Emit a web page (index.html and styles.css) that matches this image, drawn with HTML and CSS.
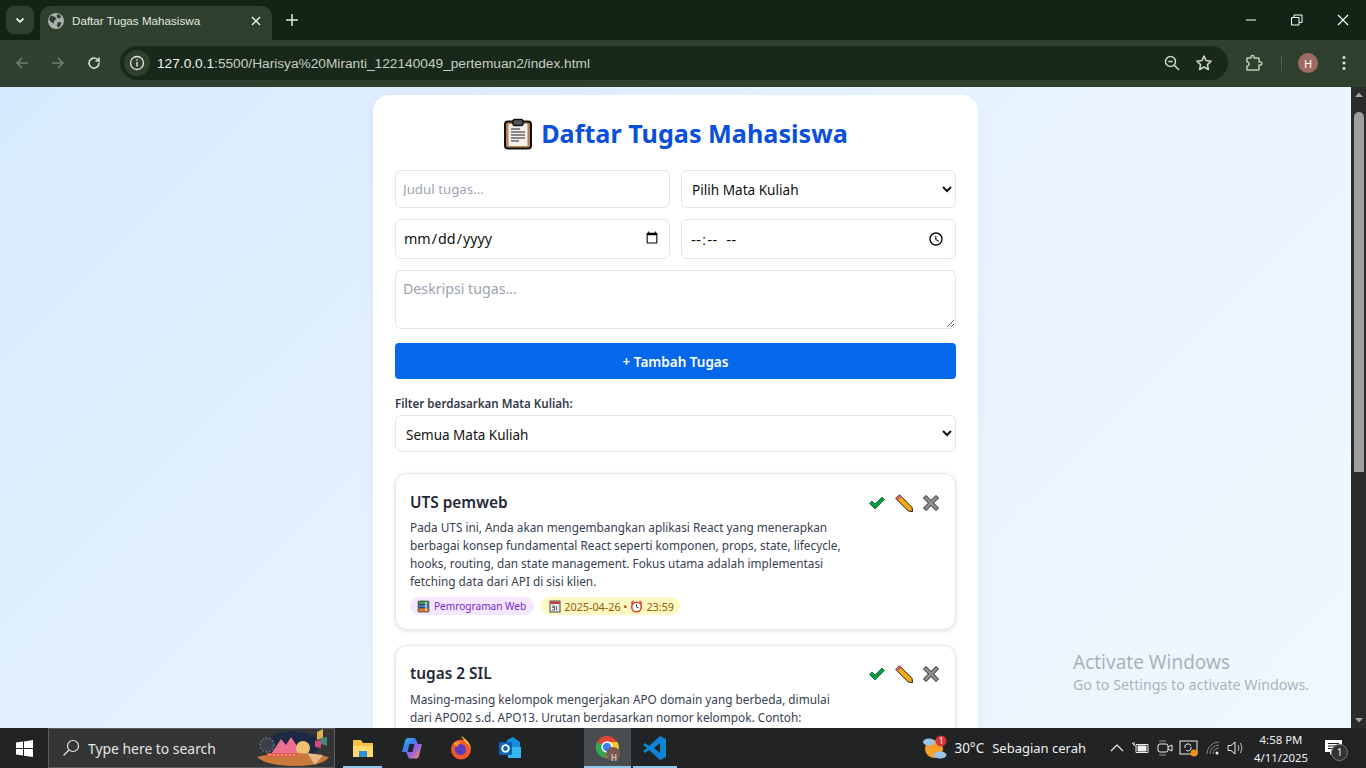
FILE: index.html
```html
<!DOCTYPE html>
<html lang="en-US">
<head>
<meta charset="utf-8">
<title>Daftar Tugas Mahasiswa</title>
<link rel="stylesheet" href="styles.css">
</head>
<body>
<div class="tabstrip">
  <div class="tabsearch"><svg width="12" height="12" viewBox="0 0 12 12"><path d="M2.500 4.500 6 8l3.500-3.500" fill="none" stroke="#e3e8e0" stroke-width="1.800"/></svg></div>
  <div class="tab">
    <svg class="favicon" width="16" height="16" viewBox="0 0 16 16"><circle cx="8" cy="8" r="8" fill="#aab0ad"/><path d="M3 2.500 7 4l1.500 2-2 1.500-1 3L3 9 1 6.500zM10 1l3 2-1 2.500-2.500-.5-1-2.500zM10 9l3.500 .5-1.500 4-2.500 1L9 12z" fill="#2f3f2e"/></svg>
    <span class="tabtitle">Daftar Tugas Mahasiswa</span>
    <svg class="tabclose" width="10" height="10" viewBox="0 0 10 10"><path d="M1 1l8 8M9 1 1 9" stroke="#e3e8e0" stroke-width="1.500"/></svg>
  </div>
  <svg class="newtab" width="12" height="12" viewBox="0 0 12 12"><path d="M6 0v12M0 6h12" stroke="#e3e8e0" stroke-width="1.500"/></svg>
  <div class="winctl">
    <svg width="12" height="12" viewBox="0 0 12 12"><path d="M1 6h10" stroke="#fff"/></svg>
    <svg width="12" height="12" viewBox="0 0 12 12"><path d="M.5 3.500h7.500v7.500H.5zM3 3.500V1h8v7.500H8" fill="none" stroke="#fff"/></svg>
    <svg width="12" height="12" viewBox="0 0 12 12"><path d="M1 1l10 10M11 1 1 11" stroke="#fff" stroke-width="1.100"/></svg>
  </div>
</div>
<div class="toolbar">
  <svg class="navic" width="16" height="16" viewBox="0 0 16 16"><path d="M14 8H3M8 3 3 8l5 5" fill="none" stroke="#6f7f6e" stroke-width="1.500"/></svg>
  <svg class="navic" width="16" height="16" viewBox="0 0 16 16"><path d="M2 8h11M8 3l5 5-5 5" fill="none" stroke="#6f7f6e" stroke-width="1.500"/></svg>
  <svg class="navic" width="16" height="16" viewBox="0 0 16 16"><path d="M13 8a5 5 0 1 1-1.500-3.500L13 6V2.500M13 6H9.500" fill="none" stroke="#d5dcd2" stroke-width="1.600"/></svg>
  <div class="omnibox">
    <div class="siteinfo"><svg width="16" height="16" viewBox="0 0 16 16"><circle cx="8" cy="8" r="6.500" fill="none" stroke="#e3e8e0" stroke-width="1.300"/><path d="M8 7v4.500M8 4.300v1.500" stroke="#e3e8e0" stroke-width="1.400"/></svg></div>
    <span class="url"><span class="urlhost">127.0.0.1</span>:5500/Harisya%20Miranti_122140049_pertemuan2/index.html</span>
    <svg class="omniic" width="18" height="18" viewBox="0 0 18 18"><circle cx="7.500" cy="7.500" r="5" fill="none" stroke="#cfd8cc" stroke-width="1.500"/><path d="M11 11l5 5M5.300 7.500h4.400" stroke="#cfd8cc" stroke-width="1.500"/></svg>
    <svg class="omniic" width="18" height="18" viewBox="0 0 18 18"><path d="M9 2l2.100 4.600 5 .6-3.700 3.400 1 4.900L9 13l-4.400 2.500 1-4.900L1.900 7.200l5-.6z" fill="none" stroke="#cfd8cc" stroke-width="1.500" stroke-linejoin="round"/></svg>
  </div>
  <svg class="ext" width="18" height="18" viewBox="0 0 18 18"><path d="M2 4h4V3a1.500 1.500 0 0 1 3 0v1h5v4h1.500a1.500 1.500 0 0 1 0 3H14v5H2v-4a2 2 0 0 0 0-4z" fill="none" stroke="#bccbb8" stroke-width="1.500" stroke-linejoin="round"/></svg>
  <div class="sep"></div>
  <div class="avatar">H</div>
  <svg class="menu" width="4" height="16" viewBox="0 0 4 16"><circle cx="2" cy="2.500" r="1.600" fill="#d5dcd2"/><circle cx="2" cy="8" r="1.600" fill="#d5dcd2"/><circle cx="2" cy="13.500" r="1.600" fill="#d5dcd2"/></svg>
</div>
<div class="viewport">
  <main class="page">
    <div class="container">
      <h1 class="title">
        <svg class="clip" width="30" height="32" viewBox="0 0 30 32"><rect x="2" y="3.500" width="26" height="27" rx="3" fill="#b5835a" stroke="#111" stroke-width="2"/><rect x="5.500" y="6" width="19" height="22" fill="#f3f1ec"/><rect x="10" y="1.500" width="10" height="6" rx="2" fill="#555" stroke="#111" stroke-width="1.500"/><path d="M8 11h9M8 14h14M8 17h14M8 20h14M8 23h8" stroke="#666" stroke-width="1.300"/></svg>
        <span>Daftar Tugas Mahasiswa</span>
      </h1>
      <div class="formgrid">
        <input class="field f38 judul" type="text" placeholder="Judul tugas...">
        <select class="field f38 sel"><option>Pilih Mata Kuliah</option></select>
        <input class="field f40 dt" type="date">
        <input class="field f40 tm" type="time">
      </div>
      <textarea class="field desc" placeholder="Deskripsi tugas..."></textarea>
      <button class="add">+ Tambah Tugas</button>
      <label class="flabel">Filter berdasarkan Mata Kuliah:</label>
      <select class="field sel fsel"><option>Semua Mata Kuliah</option></select>
      <article class="task">
        <div class="taskbody">
          <h3 class="tasktitle">UTS pemweb</h3>
          <p class="taskdesc">Pada UTS ini, Anda akan mengembangkan aplikasi React yang menerapkan berbagai konsep fundamental React seperti komponen, props, state, lifecycle, hooks, routing, dan state management. Fokus utama adalah implementasi fetching data dari API di sisi klien.</p>
          <div class="tags">
            <span class="tag purple"><svg width="13" height="13" viewBox="0 0 13 13"><rect x="1" y="1" width="11" height="3.500" rx="1" fill="#3f9a5a" stroke="#333" stroke-width=".7"/><rect x="1" y="4.500" width="11" height="3.500" rx="1" fill="#3c78c8" stroke="#333" stroke-width=".7"/><rect x="1" y="8" width="11" height="4" rx="1" fill="#e07a2e" stroke="#333" stroke-width=".7"/><path d="M9 2v9" stroke="#eee" stroke-width="1.200"/></svg>Pemrograman Web</span>
            <span class="tag yellow"><svg width="12" height="13" viewBox="0 0 12 13"><rect x="1" y="1" width="10" height="11" fill="#eee" stroke="#444"/><rect x="1.500" y="1.500" width="9" height="2.500" fill="#c0392b"/><path d="M3 6h2.500v1.500H3.500M3.500 7.500H5.500V10H3M7.500 6v4.500" fill="none" stroke="#444" stroke-width=".8"/></svg>2025-04-26 • <svg width="13" height="13" viewBox="0 0 13 13"><circle cx="6.500" cy="7" r="4.800" fill="#fff" stroke="#d9432f" stroke-width="1.600"/><path d="M6.500 4.500V7l2 1" stroke="#333" fill="none"/><path d="M1 3.500 3.500 1M12 3.500 9.500 1" stroke="#d9432f" stroke-width="1.400"/></svg>23:59</span>
          </div>
        </div>
        <div class="actions">
          <svg width="18" height="18" viewBox="0 0 18 18"><path d="M1.500 9.500 4 7l3 3 7-7 2.500 2.500L7 15z" fill="#0a9a3c" stroke="#064" stroke-width=".8"/></svg>
          <svg width="18" height="18" viewBox="0 0 18 18"><path d="M4.500 .8 17 13.300l.6 4.300-4.300-.6L.8 4.500z" fill="#f4a916" stroke="#222" stroke-width="1"/><path d="M1.300 4.500 4.500 1.300 6.300 3.100 3.100 6.300z" fill="#e5566a"/></svg>
          <svg width="18" height="18" viewBox="0 0 18 18"><path d="M4 1.500 9 6.500l5-5L16.500 4l-5 5 5 5-2.500 2.500-5-5-5 5L1.500 14l5-5-5-5z" fill="#8f8f8f" stroke="#222" stroke-width="1"/></svg>
        </div>
      </article>
      <article class="task">
        <div class="taskbody">
          <h3 class="tasktitle">tugas 2 SIL</h3>
          <p class="taskdesc">Masing-masing kelompok mengerjakan APO domain yang berbeda, dimulai dari APO02 s.d. APO13. Urutan berdasarkan nomor kelompok. Contoh: kelompok 1 mengerjakan APO02, kelompok 2 mengerjakan APO03.</p>
        </div>
        <div class="actions">
          <svg width="18" height="18" viewBox="0 0 18 18"><path d="M1.500 9.500 4 7l3 3 7-7 2.500 2.500L7 15z" fill="#0a9a3c" stroke="#064" stroke-width=".8"/></svg>
          <svg width="18" height="18" viewBox="0 0 18 18"><path d="M4.500 .8 17 13.300l.6 4.300-4.300-.6L.8 4.500z" fill="#f4a916" stroke="#222" stroke-width="1"/><path d="M1.300 4.500 4.500 1.300 6.300 3.100 3.100 6.300z" fill="#e5566a"/></svg>
          <svg width="18" height="18" viewBox="0 0 18 18"><path d="M4 1.500 9 6.500l5-5L16.500 4l-5 5 5 5-2.500 2.500-5-5-5 5L1.500 14l5-5-5-5z" fill="#8f8f8f" stroke="#222" stroke-width="1"/></svg>
        </div>
      </article>
    </div>
  </main>
  <div class="scrollbar">
    <svg width="14" height="17" viewBox="0 0 14 17"><path d="M3 10l4-4.500 4 4.500z" fill="#a3a3a3"/></svg>
    <div class="thumb"></div>
    <div class="track"></div>
    <svg width="14" height="17" viewBox="0 0 14 17"><path d="M3 7l4 4.500L11 7z" fill="#a3a3a3"/></svg>
  </div>
  <div class="activate">
    <div class="act1">Activate Windows</div>
    <div class="act2">Go to Settings to activate Windows.</div>
  </div>
</div>
<div class="taskbar">
  <div class="start"><svg width="17" height="17" viewBox="0 0 17 17"><path d="M0 2.500 7 1.500V8H0zM8 1.400 17 0v8H8zM0 9h7v6.500L0 14.500zM8 9h9v8l-9-1.300z" fill="#fff"/></svg></div>
  <div class="search">
    <svg width="18" height="18" viewBox="0 0 18 18"><circle cx="11" cy="7" r="5.500" fill="none" stroke="#e6e6e6" stroke-width="1.200"/><path d="M7 11 1.500 16.500" stroke="#e6e6e6" stroke-width="1.200"/></svg>
    <span class="searchtext">Type here to search</span>
    <svg class="doodle" width="74" height="38" viewBox="0 0 74 38"><ellipse cx="36" cy="16" rx="26" ry="14" fill="#1c2a44"/><circle cx="10" cy="16" r="7" fill="#3a3f48" stroke="#8a8f98" stroke-dasharray="2 1.500"/><path d="M14 25 24 10l5 6 5-8 6 9 8 8z" fill="#ef6f8f"/><circle cx="46" cy="19" r="7" fill="#f0c070"/><path d="M0 28q34-8 72 0-6 9-34 9T0 28z" fill="#c97a3a"/><rect x="10" y="24" width="30" height="4" fill="#e25b4f"/><path d="M12 26h26" stroke="#ffd27a" stroke-dasharray="2 2"/><path d="M60 3l6-3v9l-6 2z" fill="#e0b050"/><path d="M64 9l6-1v9l-6-2z" fill="#3c8a7a"/><path d="M58 12l6-1v8l-6-1z" fill="#d4497a"/><path d="M50 24l16 2-8 10z" fill="#e6b888"/></svg>
  </div>
  <div class="tbicons">
    <div class="tbi open"><svg width="22" height="20" viewBox="0 0 22 20"><path d="M1 2h8l2 3h10v14H1z" fill="#f5c242"/><path d="M1 8h20v11H1z" fill="#ffd969"/><path d="M7 13h8v6H7z" fill="#2a8ed8"/></svg></div>
    <div class="tbi"><svg width="22" height="22" viewBox="0 0 22 22"><defs><linearGradient id="cp" x1="0" y1="0" x2="1" y2="1"><stop offset="0" stop-color="#2cc8e0"/><stop offset=".35" stop-color="#3d7ef0"/><stop offset=".6" stop-color="#9a5ee8"/><stop offset="1" stop-color="#f0a03a"/></linearGradient></defs><path d="M7 1h7l3 6h4l-3 12c-.5 2-2 2.500-3 2.500H8L5 15H1L4 4c.5-2 1.500-3 3-3z" fill="url(#cp)"/><path d="M8.500 7h5l-2 8h-5z" fill="#20242a"/></svg></div>
    <div class="tbi"><svg width="22" height="24" viewBox="0 0 22 24"><circle cx="11" cy="13.500" r="10" fill="#f0582c"/><path d="M11 0c4 2 9 6 10 13-1-3-3-5-5-6z" fill="#ffbe2d"/><circle cx="10.500" cy="13.500" r="5.500" fill="#5a3bc0"/><path d="M3 8c2-3 5-3 8-2-2 1-3 3-3 5z" fill="#ff8c2d"/></svg></div>
    <div class="tbi"><svg width="24" height="24" viewBox="0 0 24 24"><path d="M9 4 15 1l7 5v13H9z" fill="#1590d8"/><path d="M10 11h13v11H10z" fill="#35b8f0"/><rect x="1" y="6" width="13" height="13" rx="1.500" fill="#0a64b8"/><circle cx="7.500" cy="12.500" r="3.300" fill="none" stroke="#fff" stroke-width="1.800"/></svg></div>
    <div class="tbgap"></div>
    <div class="tbi chrome open"><svg width="26" height="26" viewBox="0 0 26 26"><circle cx="12" cy="12" r="11" fill="#e0453a"/><path d="M12 12 2 7A11 11 0 0 0 10 23z" fill="#2da94f"/><path d="M12 7h10.500A11 11 0 0 1 11 23z" fill="#f7c42d"/><circle cx="12" cy="12" r="5" fill="#3b82ee" stroke="#fff" stroke-width="1.500"/><circle cx="18" cy="19" r="7" fill="#7a5a50"/></svg><span class="chromeh">H</span></div>
    <div class="tbi code open"><svg width="24" height="26" viewBox="0 0 24 26"><path d="M17 1 23 4v18l-6 3L6 15l-4 3-2-2 4-3-4-3 2-2 4 3zM17 8l-6 5 6 5z" fill="#0d86d6"/></svg></div>
  </div>
  <div class="tray">
    <div class="weather"><svg width="26" height="26" viewBox="0 0 26 26"><circle cx="12" cy="14" r="9" fill="#f5a028"/><ellipse cx="7" cy="7" rx="6" ry="3.500" fill="#9cc4e8"/><ellipse cx="18" cy="20" rx="6.500" ry="3.500" fill="#9cc4e8"/><circle cx="19" cy="6" r="5.500" fill="#d8343a"/></svg><span class="wbadge">1</span></div>
    <span class="wtext">30°C</span>
    <span class="wtext wdesc">Sebagian cerah</span>
    <svg class="chev" width="14" height="8" viewBox="0 0 14 8"><path d="M1 7l6-6 6 6" fill="none" stroke="#eee" stroke-width="1.200"/></svg>
    <svg class="trayi batt" width="18" height="14" viewBox="0 0 18 14"><path d="M5 3.500h12v8H5z" fill="none" stroke="#eee"/><path d="M7 5h8v5H7zM1 2l3 3M3 1v3" fill="#eee" stroke="#eee"/></svg>
    <svg class="trayi cam" width="18" height="18" viewBox="0 0 18 18"><rect x="2" y="5" width="10" height="8" rx="2" fill="none" stroke="#eee"/><path d="M12 8l4-2v6l-4-2" fill="none" stroke="#eee"/><path d="M3 2h7M3 16h7" stroke="#999"/></svg>
    <svg class="trayi cap" width="20" height="18" viewBox="0 0 20 18"><rect x="1" y="2" width="17" height="13" fill="none" stroke="#eee"/><path d="M6 9a3 3 0 0 1 6-2M12 8a3 3 0 0 1-5 3" fill="none" stroke="#eee"/><circle cx="15" cy="14" r="3.500" fill="#f39018"/></svg>
    <svg class="trayi wifi" width="18" height="16" viewBox="0 0 18 16"><path d="M1 14A12 12 0 0 1 13 2M4 14a9 9 0 0 1 9-9M7 14a6 6 0 0 1 6-6" fill="none" stroke="#888"/><circle cx="11" cy="13" r="1.500" fill="#eee"/></svg>
    <svg class="trayi vol" width="18" height="16" viewBox="0 0 18 16"><path d="M1 5.500h3L8 2v12l-4-3.500H1z" fill="none" stroke="#eee"/><path d="M11 5q2 3 0 6M13.500 3q3 5 0 10" fill="none" stroke="#bbb"/></svg>
    <div class="clock"><div>4:58 PM</div><div>4/11/2025</div></div>
    <div class="notif"><svg width="18" height="16" viewBox="0 0 18 16"><path d="M0 0h17v12H8l-3 3v-3H0z" fill="#fff"/><path d="M3 3.500h11M3 6h11M3 8.500h7" stroke="#222"/></svg><span class="nbadge">1</span></div>
  </div>
</div>
</body>
</html>
```
FILE: styles.css
```css
* { box-sizing: border-box; }
html, body { margin: 0; height: 100%; overflow: hidden; }
body { display: flex; flex-direction: column; width: 1366px; height: 768px; font-family: "Noto Sans", sans-serif; background: #fff; }

.tabstrip { height: 40px; flex: none; background: #122416; display: flex; align-items: flex-start; color: #e3e8e0; }
.tabsearch { width: 28px; height: 28px; margin: 6px 0 0 6px; border-radius: 8px; background: #2f412e; display: flex; align-items: center; justify-content: center; }
.tab { width: 232px; height: 34px; margin: 6px 0 0 6px; border-radius: 10px 10px 0 0; background: #2f412e; display: flex; align-items: center; padding: 0 11px 5px 8px; font-size: 11.650px; }
.favicon { flex: none; }
.tabtitle { margin-left: 8px; flex: 1; font-family: "Liberation Sans", sans-serif; white-space: nowrap; }
.newtab { margin: 14px 0 0 14px; }
.winctl { margin-left: auto; display: flex; gap: 34px; padding: 14px 17px 0 0; }

.toolbar { height: 47px; flex: none; background: #2f412e; display: flex; align-items: center; padding: 0 0 1px 14px; }
.navic { margin-right: 20px; }
.navic:nth-child(3) { margin-right: 18px; }
.omnibox { width: 1108px; height: 34px; border-radius: 17px; background: #18281a; display: flex; align-items: center; padding: 0 15px 0 4px; flex: none; }
.siteinfo { width: 26px; height: 26px; border-radius: 50%; background: #2f412e; display: flex; align-items: center; justify-content: center; flex: none; }
.url { margin-left: 7px; flex: 1; font-family: "Liberation Sans", sans-serif; font-size: 13.700px; color: #c6cfc3; white-space: nowrap; }
.urlhost { color: #f2f5ef; }
.omniic { margin-left: 14px; }
.ext { margin-left: 17px; }
.sep { width: 1px; height: 16px; background: #4d5f4b; margin-left: 18px; }
.avatar { width: 20px; height: 20px; border-radius: 50%; background: #a06c62; color: #fff; font-size: 11px; display: flex; align-items: center; justify-content: center; margin-left: 16px; }
.menu { margin-left: 24px; }

.viewport { flex: 1; min-height: 0; display: flex; position: relative; overflow: hidden; }
.page { flex: 1; min-width: 0; overflow: hidden; background: linear-gradient(135deg, #d6eaff 0%, #e6f2ff 45%, #f0f7ff 100%); display: flex; justify-content: center; }
.container { width: 605px; height: 900px; margin-top: 8px; padding: 22px; background: #fff; border-radius: 16px; box-shadow: 0 4px 16px rgba(0,0,0,.04); flex: none; }

.title { margin: 0 0 20px; height: 33px; display: flex; align-items: center; justify-content: center; gap: 8px; font-size: 25.200px; line-height: 33px; font-weight: 700; color: #0b50d8; }
.clip { flex: none; }

.field { border: 1px solid #e2e5ec; border-radius: 6px; background: #fff; font-family: "Noto Sans", sans-serif; font-size: 13.600px; color: #111; outline: none; }
.field::placeholder { color: #9ca3af; }
.formgrid { display: grid; grid-template-columns: 1fr 1fr; column-gap: 11px; row-gap: 11px; }
.formgrid .field { width: 100%; }
.f38 { height: 38px; padding: 0 7px; }
.f40 { height: 40px; padding: 0 8px; }
.judul { font-size: 13.300px; }
.sel { padding: 0 6px; }
.f40.dt { font-size: 14.300px; padding: 0 8px 2px 7px; }
.tm { font-family: "Liberation Sans", sans-serif; font-size: 15px; }
.tm::-webkit-datetime-edit-ampm-field { margin-left: 4px; }
.desc { display: block; width: 100%; height: 59px; margin-top: 11px; padding: 8px 7px; resize: vertical; font-size: 14.200px; }
.add { display: block; width: 100%; height: 36px; margin-top: 14px; padding: 1px 0 0; border: 0; border-radius: 4px; background: #0567ea; color: #fff; font-family: "Noto Sans", sans-serif; font-size: 13.500px; font-weight: 600; }
.flabel { display: block; margin-top: 16px; font-size: 11.600px; line-height: 18px; font-weight: 600; color: #333a46; }
.fsel { display: block; width: 100%; height: 37px; margin-top: 2px; padding-top: 2px; font-size: 13.500px; }

.task { margin-top: 21px; min-height: 157px; border: 1px solid #e5e7eb; border-radius: 12px; box-shadow: 0 1px 4px rgba(0,0,0,.12); padding: 17px 14px 14px; display: flex; background: #fff; }
.task + .task { margin-top: 15px; padding-top: 16px; }
.taskbody { width: 438px; flex: none; }
.tasktitle { margin: 0 0 3px; font-size: 15.400px; line-height: 24px; font-weight: 600; color: #1f2937; }
.task + .task .tasktitle { margin-bottom: 4px; }
.taskdesc { margin: 0; font-size: 11.800px; line-height: 18px; color: #374151; }
.tags { display: flex; gap: 7px; margin-top: 7px; }
.tag { display: inline-flex; align-items: center; height: 18px; border-radius: 9px; }
.purple { gap: 4px; padding: 0 8px 0 7px; font-size: 10.100px; background: #f3e8ff; color: #7e22ce; }
.yellow { gap: 3px; padding: 0 6px 0 8px; font-size: 10.800px; background: #fef9c3; color: #92580a; }
.actions { margin-left: auto; display: flex; gap: 9px; padding-top: 3px; height: 24px; padding-right: 1px; }

.scrollbar { width: 15px; flex: none; background: #2b2b2b; display: flex; flex-direction: column; align-items: center; }
.thumb { width: 10px; height: 360px; margin-top: 8px; background: #9f9f9f; border-radius: 5px 5px 0 0; }
.track { flex: 1; }
.activate { position: absolute; left: 1073px; top: 563px; color: rgba(120,130,140,.6); font-family: "Noto Sans", sans-serif; }
.act1 { font-size: 19px; line-height: 24px; }
.act2 { font-size: 14.250px; line-height: 22px; }

.taskbar { height: 40px; flex: none; background: #212325; display: flex; align-items: stretch; color: #f0f0f0; font-size: 14px; }
.start { width: 48px; display: flex; align-items: center; justify-content: center; }
.search { width: 287px; background: #333536; border: 1px solid #5a5c5e; display: flex; align-items: center; padding-left: 13px; position: relative; }
.searchtext { margin-left: 8px; font-size: 13.900px; color: #e6e6e6; }
.doodle { margin-left: auto; margin-right: 3px; }
.tbicons { display: flex; margin-left: 3px; }
.tbi { width: 49px; display: flex; align-items: center; justify-content: center; position: relative; }
.tbi.open::after { content: ""; position: absolute; left: 5px; right: 5px; bottom: 0; height: 2px; background: #8fc8ee; }
.tbgap { width: 50px; }
.chrome { background: #4a4d4f; width: 47px; }
.chrome.open::after { left: 0; right: 0; }
.code { width: 44px; margin-left: 2px; }
.code.open::after { left: 0; right: 0; }
.chromeh { position: absolute; left: 27px; top: 24px; font-size: 8px; color: #eee; }
.tray { margin-left: auto; display: flex; align-items: center; padding-right: 10px; }
.weather { position: relative; display: flex; }
.wbadge { position: absolute; left: 14px; top: 0; width: 10px; font-size: 8px; line-height: 11px; text-align: center; color: #fff; }
.wtext { margin-left: 6px; font-size: 13.500px; }
.wdesc { margin-left: 8px; font-size: 13px; }
.chev { margin-left: 24px; }
.batt { margin-left: 7px; }
.cam { margin-left: 7px; }
.cap { margin-left: 5px; }
.wifi { margin-left: 7px; }
.vol { margin-left: 3px; }
.clock { margin-left: 6px; width: 60px; padding-top: 1px; text-align: center; font-size: 11.400px; line-height: 18px; }
.notif { width: 45px; height: 40px; display: flex; justify-content: center; align-items: center; position: relative; }
.nbadge { position: absolute; left: 20px; top: 16px; width: 17px; height: 17px; border-radius: 50%; background: #333; border: 1px solid #777; font-size: 10px; line-height: 15px; text-align: center; }
```
